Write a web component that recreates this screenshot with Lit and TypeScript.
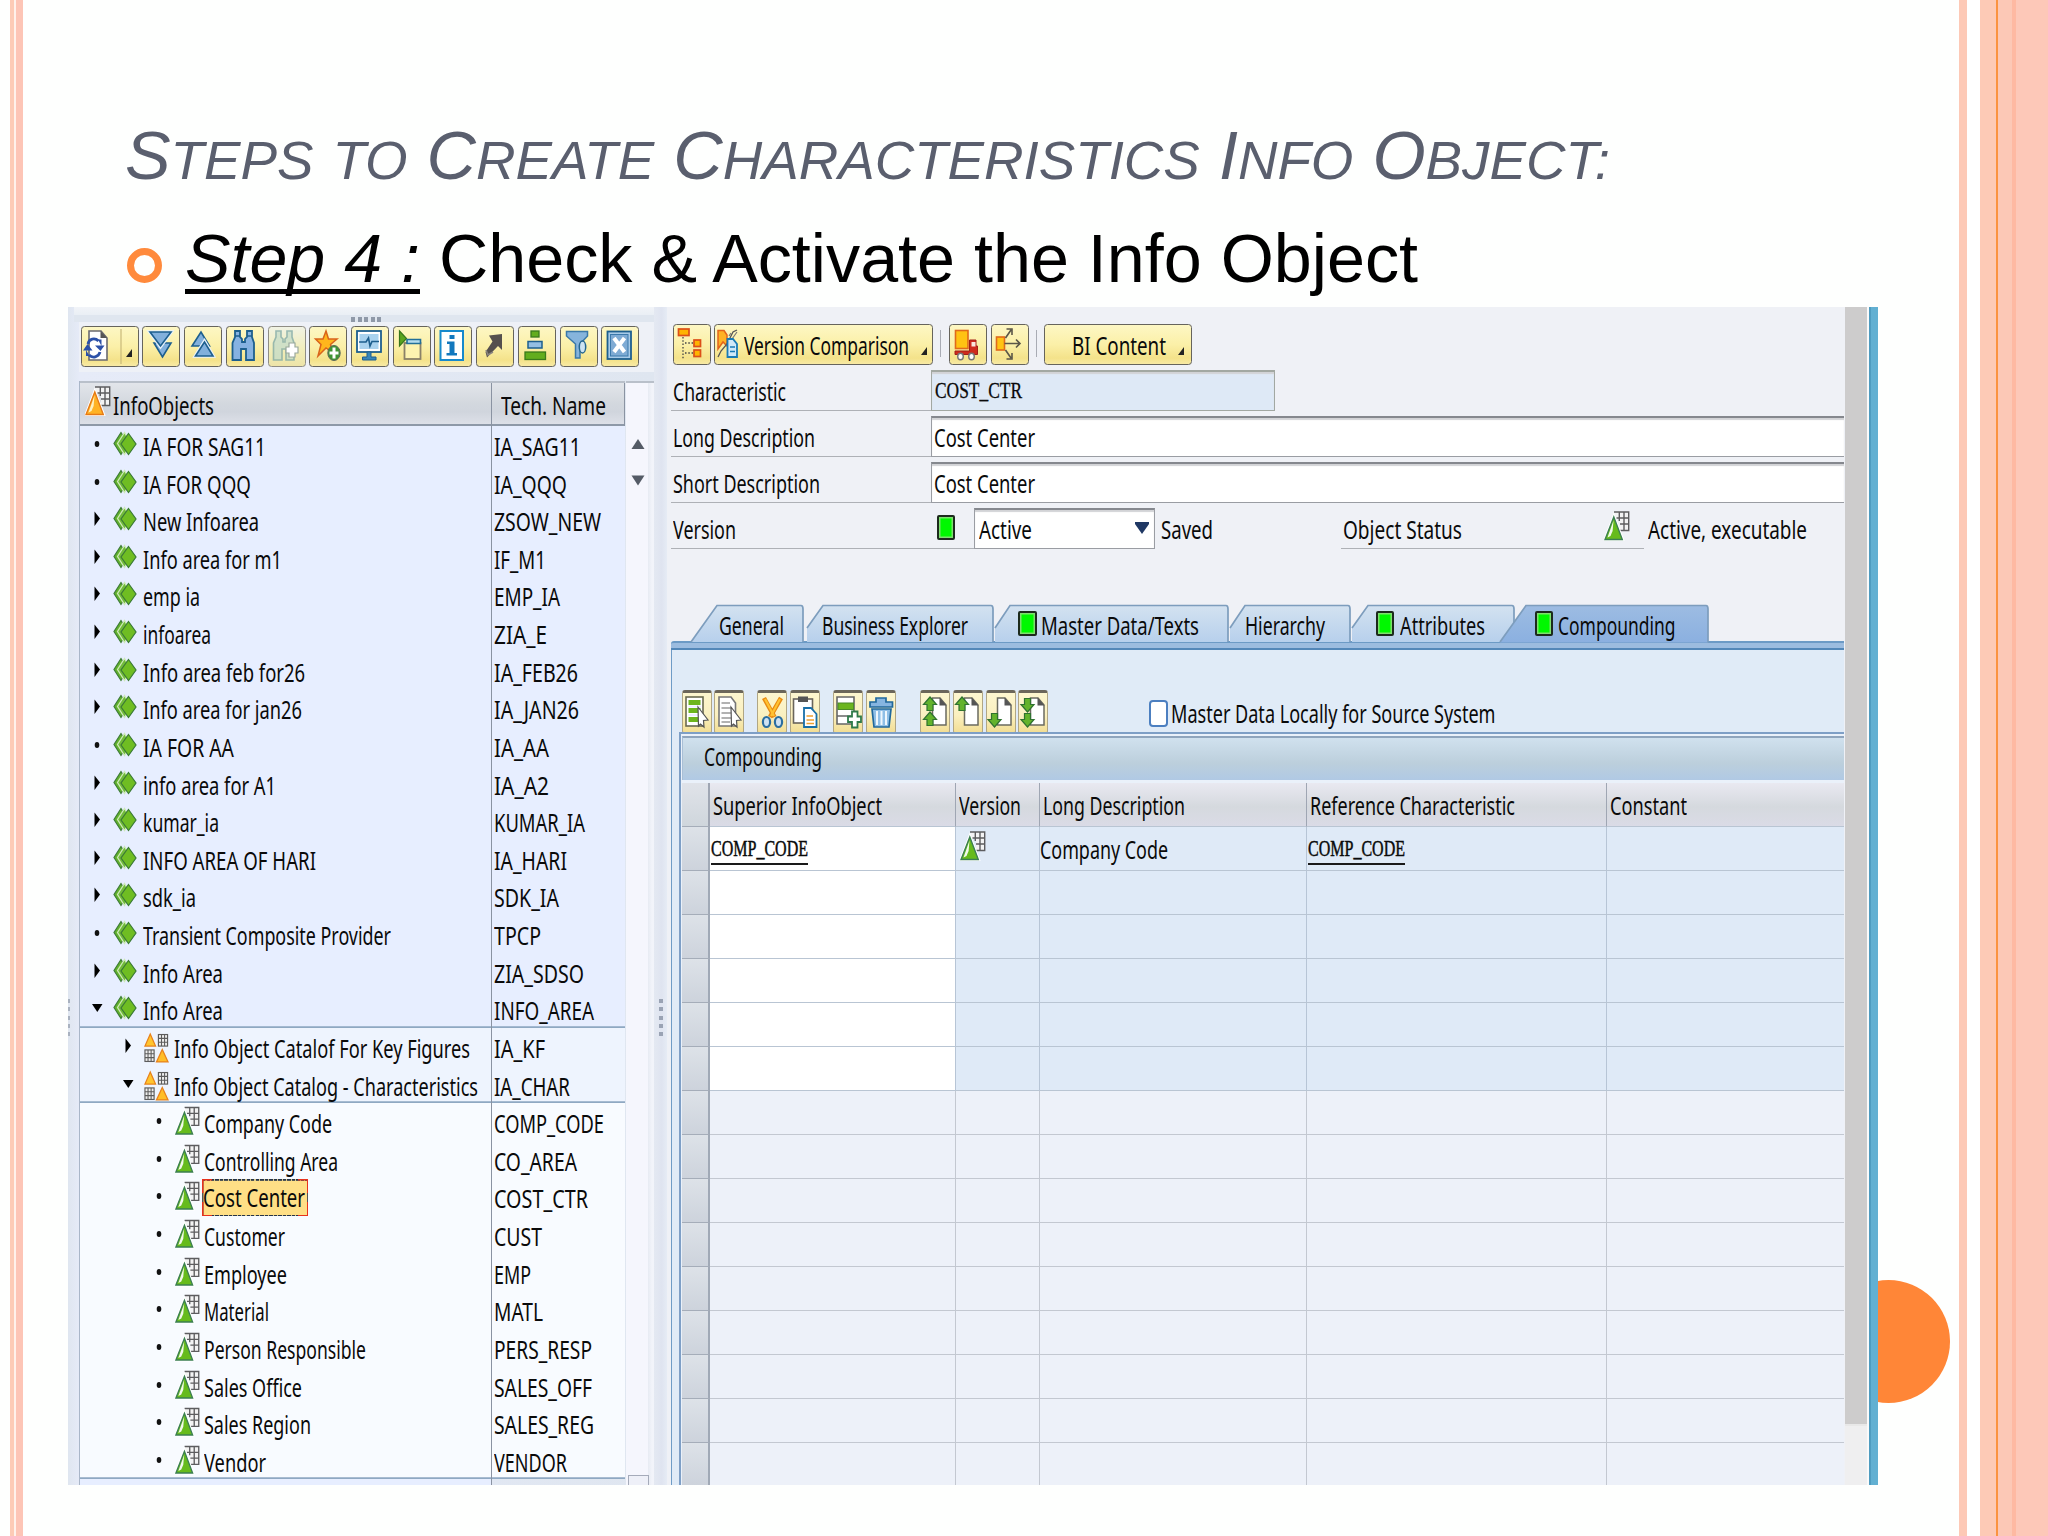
import { LitElement, html, css, svg, nothing } from "lit";
import type { TemplateResult } from "lit";
import { customElement, property } from "lit/decorators.js";
import { classMap } from "lit/directives/class-map.js";

/* A single line of text condensed or widened to an exact width. */
@customElement("fit-text")
class FitText extends LitElement {
  @property({ type: Number }) w = 100;
  static styles = css`
    :host { display: block; flex: none; white-space: pre; text-align: left; }
    .ink { display: inline-block; transform-origin: 0 50%; }
  `;
  render() {
    return html`<span class="ink"><slot></slot></span>`;
  }
  updated() {
    const ink = this.renderRoot.querySelector(".ink") as HTMLElement;
    this.style.width = this.w + "px";
    ink.style.transform = "none";
    const natural = ink.getBoundingClientRect().width;
    if (natural > 0) ink.style.transform = `scaleX(${this.w / natural})`;
  }
}

const fit = (t: string, w: number) => html`<fit-text .w=${w}>${t}</fit-text>`;

/* ---------- icons ---------- */
const pic = (w: number, h: number, body: unknown) =>
  html`<svg width=${w} height=${h} viewBox="0 0 ${w} ${h}">${body}</svg>`;

const BL = "#1d5f8e";
const leftIcons = [
  svg`<path d="M12 17H29L20.500 31Z" fill="#82b0dc" stroke=${BL} stroke-width="1.600"/><path d="M8 6H29L18.500 20.500Z" fill="#82b0dc" stroke="#e8f2fb" stroke-width="3.600"/><path d="M8 6H29L18.500 20Z" fill="#82b0dc" stroke=${BL} stroke-width="1.600"/>`,
  svg`<path d="M8 20H25.500L17 6Z" fill="#82b0dc" stroke=${BL} stroke-width="1.600"/><path d="M11.500 30H29L20.500 15.500Z" fill="#82b0dc" stroke="#e8f2fb" stroke-width="3.600"/><path d="M11.500 30H29L20.500 16Z" fill="#82b0dc" stroke=${BL} stroke-width="1.600"/>`,
  svg`<path d="M10 5H15V11L17 13V16H20V13L22 11V5H27V11L29 17V34H21V23H16V34H7.500V17L10 11Z" fill="#86b2e2" stroke=${BL} stroke-width="1.800"/><path d="M10 10H15M22 10H27" stroke=${BL} stroke-width="1.500"/>`,
  svg`<g opacity=".75"><path d="M9 5H14V11L16 13V16H18V13L20 11V5H25V11L27 17V34H19V23H15V34H6.500V17L9 11Z" fill="#c5dcc9" stroke="#7ba6a4" stroke-width="1.600"/></g><path d="M22 17H28V21H31V27H28V31H22V27H19V21H22Z" fill="#fff" stroke="#9aa89c" stroke-width="1.200"/>`,
  svg`<path d="M17 5L19.500 13H28L21.500 18.500L24 27L17 22L9 30L12 18.500L6.500 13H14Z" fill="#ffb61c" stroke="#d9641c" stroke-width="1.500"/><ellipse cx="25" cy="27" rx="6.200" ry="7.500" fill="#3f9433" stroke="#5b665a" stroke-width="1"/><path d="M25 21.500V32.500M20.500 27H29.500" stroke="#fff" stroke-width="3"/>`,
  svg`<rect x="7" y="5" width="24" height="21" fill="#fff" stroke=${BL} stroke-width="1.800"/><rect x="9.500" y="8" width="19" height="15" fill="#a9d2ee"/><path d="M9 16H16L18.500 12L20 20L22 15.500H29" fill="none" stroke=${BL} stroke-width="1.600"/><path d="M17 26H21V31H26V34H12.500V31H17Z" fill="#3a86b8" stroke=${BL} stroke-width="1"/>`,
  svg`<path d="M7.500 5L14.500 12.500L7.500 20Z" fill="#5aa51f" stroke="#37761a" stroke-width="1.200"/><rect x="12.500" y="17" width="16" height="16" fill="#fdf3b0" stroke="#8a8168" stroke-width="1.800"/><path d="M15 13.500H28.500V17.500H15Z" fill="#b4dcef" stroke="#226f99" stroke-width="1.600"/>`,
  svg`<rect x="6.500" y="5" width="22.500" height="29" fill="#fff" stroke="#1689cc" stroke-width="2"/><rect x="15.500" y="9" width="5" height="4" fill="#1278be"/><path d="M13 15.500H20.500V27H23V29.500H12.500V27H15.500V18H13Z" fill="#1278be"/>`,
  svg`<path d="M13 9.500L26 8V24L22 20L11 31.500L9.500 26L16.500 15.500Z" fill="#55504e"/><path d="M10 24L12 29L17 26" stroke="#8b8580" stroke-width="1.500" fill="none"/>`,
  svg`<rect x="14" y="5" width="8" height="6" fill="#63ad1e" stroke="#3a7a1c" stroke-width="1.300"/><rect x="11" y="15.500" width="14" height="6.500" fill="#94bfe3" stroke=${BL} stroke-width="1.500"/><rect x="8" y="26" width="20.500" height="7.500" fill="#63ad1e" stroke="#3a7a1c" stroke-width="1.300"/>`,
  svg`<path d="M7.500 5.500H28.500V10L21 18V32H16.500V18L7.500 10Z" fill="#86b4dc" stroke="#3a78a8" stroke-width="1.500"/><ellipse cx="23.500" cy="21" rx="3.200" ry="6" fill="#cde3f2" stroke="#23658f" stroke-width="1.500"/>`,
  svg`<rect x="6.500" y="5.500" width="23.500" height="27.500" fill="#a8cbe8" stroke=${BL} stroke-width="1.800"/><rect x="9.500" y="8.500" width="17.500" height="21.500" fill="#7fabd4" stroke="#3b79ab" stroke-width="1"/><path d="M13 12L23.500 26M23.500 12L13 26" stroke="#fff" stroke-width="4"/>`,
];
const refreshIcon = svg`<path d="M9 5H21L27 12V34H9Z" fill="#fff" stroke="#6a6a70" stroke-width="1.600"/><path d="M20.500 5V12H27Z" fill="#555"/>
  <path d="M8 18C9 12.500 15 11.500 18.500 15" fill="none" stroke="#2b50a8" stroke-width="2.800"/><path d="M15 19.500H24.500L20.500 25Z M21.500 20V13.500H18Z" fill="#2b50a8"/>
  <path d="M20 26C18.500 31.500 12.500 32.500 9 29" fill="none" stroke="#2b50a8" stroke-width="2.800"/><path d="M3 24.500H12.500L7.500 18Z M6 24V30H9.500Z" fill="#2b50a8"/>
  <path d="M41 3V38" stroke="#c9b97a" stroke-width="1.200"/><path d="M46 31H52V23Z" fill="#222"/>`;

const cubeGrid = svg`<path d="M10.500 1H24.500V19H16V8H10.500Z" fill="#f3f3f3"/><path d="M10 1H24.700V19.500H16M15.300 1V10M20 1V19.500M12.500 7H24.500M16 13H24.500" stroke="#5d5d5f" stroke-width="1.400" fill="none"/>`;
const charIcon = (orange: boolean) => pic(26, 30, svg`${cubeGrid}
  <path d="M9.800 5.500L18.500 28.500H1Z" fill=${orange ? "#ffb224" : "#66bb1c"} stroke="#fff" stroke-width="3"/>
  <path d="M9.800 6L18.300 28.500H1Z" fill=${orange ? "#ffb224" : "#66bb1c"} stroke=${orange ? "#e67a15" : "#3b7f52"} stroke-width="1.400"/>
  <path d="M9.500 9.500L8.600 20L6.500 25L3.500 26.500Z" fill=${orange ? "#fff0c0" : "#f1f9ec"}/>`);
const diamondIcon = pic(24, 25, svg`<path d="M8 1.500L1 12.500L8 23.500L15 12.500Z" fill="#62b12c" stroke="#3d7c37" stroke-width="1.200"/><path d="M11.500 1.500L4.500 12.500L11.500 23.500L18 12.500Z" fill="#72bb3a" stroke="#cdeab8" stroke-width="1.300"/><path d="M15.500 2.500L23 13L15.500 23.500L8 13Z" fill="#6fbd22" stroke="#3a7a35" stroke-width="1.200"/>`);
const miniGrid = (x: number, y: number) => svg`<rect x=${x} y=${y} width="9.500" height="12" fill="#eee" stroke="#5c5c5c" stroke-width="1.200"/><path d="M${x + 3.200} ${y}v12M${x + 6.400} ${y}v12M${x} ${y + 4}h9.500M${x} ${y + 8}h9.500" stroke="#5c5c5c" stroke-width="1.100"/>`;
const catalogIcon = pic(26, 32, svg`<path d="M6.500 1.500L12 14H1Z" fill="#ffc52e" stroke="#e8821b" stroke-width="1.300"/>${miniGrid(15, 2)}${miniGrid(1, 18)}<path d="M19 17.500L25 30.500H13Z" fill="#ffbe28" stroke="#e8821b" stroke-width="1.300"/>`);
const led = html`<span class="led"></span>`;

const hierIcon = svg`<rect x="6.500" y="5" width="10.500" height="6.500" fill="#ffb400" stroke="#dc4f17" stroke-width="1.700"/><path d="M11 13V36M13 19H21M13 29H21" stroke="#444" stroke-width="1.300" stroke-dasharray="1.500 1.800" fill="none"/><rect x="22" y="16" width="6.500" height="6.500" fill="#ffb400" stroke="#dc4f17" stroke-width="1.700"/><rect x="22" y="26" width="6.500" height="6.500" fill="#ffb400" stroke="#dc4f17" stroke-width="1.700"/>`;
const compareIcon = svg`<path d="M5 6.500H11L14 11V22L10 18L5 25Z" fill="#ffb224" stroke="#e2631b" stroke-width="1.500"/><path d="M5 33L8 27L14 20L20 8L24 6" fill="none" stroke="#555" stroke-width="1.300"/><path d="M16 12L18 9M19 15L24 8" stroke="#777" stroke-width="1.200"/><path d="M14.500 15H20L24 20V33H14.500Z" fill="#cfe8f8" stroke="#187ab5" stroke-width="1.800"/><path d="M17 23H22M17 27.500H22" stroke="#187ab5" stroke-width="1.500"/>`;
const truckIcon = svg`<rect x="6.500" y="6.500" width="12.500" height="18" fill="#ffc313" stroke="#e06a1b" stroke-width="1.600"/><path d="M20.500 16H27V22H28.500V30.500H6V27H20.500Z" fill="#cf2b1d" stroke="#a21f18" stroke-width="1"/><rect x="22.500" y="18" width="4" height="4.500" fill="#fbe5dc"/><ellipse cx="11.500" cy="32.500" rx="2.800" ry="3.300" fill="#fff" stroke="#777" stroke-width="1.400"/><ellipse cx="22.500" cy="32.500" rx="2.800" ry="3.300" fill="#fff" stroke="#777" stroke-width="1.400"/>`;
const spreadIcon = svg`<rect x="6.500" y="13" width="8" height="13" fill="#ffc313" stroke="#e06a1b" stroke-width="1.600"/><path d="M14.500 19.500H29M26 15.500L30 19.500L26 23.500M15.500 14L21 6M16.500 5H22V11M15.500 26L21 34M16.500 35H22V29" fill="none" stroke="#5a5648" stroke-width="1.600"/>`;

/* table toolbar, each 30 x 44 */
const cursor = svg`<path d="M17 17L27 30L22.500 30.500L23 37L19.500 34L17.500 36Z" fill="#fff" stroke="#555" stroke-width="1.200"/>`;
const upArrow = (x: number, y: number) => svg`<path d="M${x} ${y}l6.500 7.500h-3.500v6h-6v-6h-3.500z" fill="#63b32c" stroke="#2f7230" stroke-width="1.200"/>`;
const downArrow = (x: number, y: number) => svg`<path d="M${x} ${y}l6.500 -7.500h-3.500v-6h-6v6h-3.500z" fill="#63b32c" stroke="#2f7230" stroke-width="1.200"/>`;
const sheet = svg`<path d="M12.500 8H20L26 15V35H12.500Z" fill="#fff" stroke="#6b6b60" stroke-width="1.500"/><path d="M19.500 7.500V15.500H26.500Z" fill="#555"/>`;
const gridIcons: { gap: number; body: unknown }[] = [
  { gap: 0, body: svg`<rect x="5" y="7" width="17" height="29" fill="#fff" stroke="#6a6a50" stroke-width="1.600"/><path d="M7.500 12.500H19.500M7.500 20.500H19.500M7.500 29.500H18" stroke="#6db51d" stroke-width="5"/><path d="M7.500 16.500H20M7.500 25H20" stroke="#eef" stroke-width="2"/>${cursor}` },
  { gap: 2.600, body: svg`<path d="M5 7H17L21.500 13V36H5Z" fill="#fff" stroke="#777" stroke-width="1.600"/><path d="M7.500 13H16M7.500 18H18M7.500 23H18M7.500 28H17M7.500 32H16" stroke="#999" stroke-width="1.500"/>${cursor}` },
  { gap: 13, body: svg`<path d="M7 8L17.500 27M24 8L13 27" stroke="#e88a12" stroke-width="4.500"/><path d="M8 9L17 26M23 9L14 26" stroke="#ffc232" stroke-width="2.200"/><ellipse cx="9.500" cy="32" rx="3.600" ry="5" fill="#cfe2f2" stroke="#2b6ea0" stroke-width="2.200"/><ellipse cx="21.500" cy="32" rx="3.600" ry="5" fill="#cfe2f2" stroke="#2b6ea0" stroke-width="2.200"/>` },
  { gap: 3, body: svg`<rect x="3.500" y="9" width="19" height="24" fill="#fff" stroke="#6a655c" stroke-width="1.600"/><rect x="8" y="6.500" width="10" height="5.500" fill="#555"/><path d="M14 18H21L26.500 24V37H14Z" fill="#fff" stroke="#186fa8" stroke-width="1.800"/><path d="M16.500 26H23M16.500 30H24M16.500 33.500H24" stroke="#f0a030" stroke-width="1.400"/>` },
  { gap: 13, body: svg`<path d="M4 7H21V34H4Z" fill="#fff" stroke="#666" stroke-width="1.600"/><path d="M4 26H18" stroke="#666" stroke-width="1.500"/><rect x="5" y="13" width="15.500" height="6.500" fill="#6cb51f" stroke="#4b8a28" stroke-width="1"/><path d="M19 21.500H24.500V26.500H28V32H24.500V37.500H19V32H15V26.500H19Z" fill="#fff" stroke="#2f7a4a" stroke-width="1.800"/>` },
  { gap: 3, body: svg`<path d="M10 8H20V12H26.500V17H4V12H10Z" fill="#86b5e0" stroke="#20689c" stroke-width="1.700"/><path d="M6 19H25L23 37H8Z" fill="#8fbfe6" stroke="#20689c" stroke-width="1.700"/><path d="M11 21V35M15.500 21V35M20 21V35" stroke="#eef7fd" stroke-width="2"/>` },
  { gap: 24, body: svg`${sheet}${upArrow(10, 7)}${upArrow(10, 22)}` },
  { gap: 2.800, body: svg`${sheet}${upArrow(10, 7)}` },
  { gap: 2.800, body: svg`${sheet}${downArrow(9.500, 37)}` },
  { gap: 2.800, body: svg`${sheet}${downArrow(9.500, 22)}${downArrow(9.500, 37)}` },
];

/* ---------- data ---------- */
type Node = { s: "dot" | "shut" | "open"; lv: 0 | 1 | 2; t: string; w: number; k: string; kw: number };
const n = (s: Node["s"], lv: Node["lv"], t: string, w: number, k: string, kw: number): Node => ({ s, lv, t, w, k, kw });
const nodes: Node[] = [
  n("dot", 0, "IA FOR SAG11", 123, "IA_SAG11", 87),
  n("dot", 0, "IA FOR QQQ", 108, "IA_QQQ", 73),
  n("shut", 0, "New Infoarea", 116, "ZSOW_NEW", 107),
  n("shut", 0, "Info area for m1", 139, "IF_M1", 52),
  n("shut", 0, "emp ia", 57, "EMP_IA", 66),
  n("shut", 0, "infoarea", 68, "ZIA_E", 53),
  n("shut", 0, "Info area feb for26", 162, "IA_FEB26", 84),
  n("shut", 0, "Info area for jan26", 159, "IA_JAN26", 85),
  n("dot", 0, "IA FOR AA", 91, "IA_AA", 55),
  n("shut", 0, "info area for A1", 133, "IA_A2", 55),
  n("shut", 0, "kumar_ia", 76, "KUMAR_IA", 91),
  n("shut", 0, "INFO AREA OF HARI", 173, "IA_HARI", 73),
  n("shut", 0, "sdk_ia", 53, "SDK_IA", 65),
  n("dot", 0, "Transient Composite Provider", 248, "TPCP", 47),
  n("shut", 0, "Info Area", 80, "ZIA_SDSO", 90),
  n("open", 0, "Info Area", 80, "INFO_AREA", 100),
  n("shut", 1, "Info Object Catalof For Key Figures", 296, "IA_KF", 51),
  n("open", 1, "Info Object Catalog - Characteristics", 304, "IA_CHAR", 76),
  n("dot", 2, "Company Code", 128, "COMP_CODE", 110),
  n("dot", 2, "Controlling Area", 134, "CO_AREA", 83),
  n("dot", 2, "Cost Center", 102, "COST_CTR", 94),
  n("dot", 2, "Customer", 81, "CUST", 48),
  n("dot", 2, "Employee", 83, "EMP", 37),
  n("dot", 2, "Material", 65, "MATL", 49),
  n("dot", 2, "Person Responsible", 162, "PERS_RESP", 98),
  n("dot", 2, "Sales Office", 98, "SALES_OFF", 98),
  n("dot", 2, "Sales Region", 107, "SALES_REG", 100),
  n("dot", 2, "Vendor", 62, "VENDOR", 73),
];

type Tab = { x: number; w: number; slant: number; t: string; tx: number; tw: number; led?: number; on?: boolean; cut?: number };
/* x: left foot; slant: run of the sloped edge; cut: how far up the slope is clipped by its neighbour */
const tabs: Tab[] = [
  { x: 690, w: 114, slant: 27, t: "General", tx: 718.500, tw: 65 },
  { x: 806, w: 188, slant: 17, t: "Business Explorer", tx: 822, tw: 146, cut: 24 },
  { x: 994, w: 235, slant: 16, t: "Master Data/Texts", tx: 1041, tw: 158, led: 1018, cut: 24 },
  { x: 1229, w: 122, slant: 16, t: "Hierarchy", tx: 1244.500, tw: 80, cut: 24 },
  { x: 1351, w: 164, slant: 17, t: "Attributes", tx: 1399.500, tw: 85, led: 1375.500, cut: 24 },
  { x: 1499, w: 210, slant: 27, t: "Compounding", tx: 1558, tw: 117.500, led: 1534.500, on: true },
];

@customElement("tree-row")
class TreeRow extends LitElement {
  @property({ attribute: false }) node!: Node;
  @property({ type: Boolean }) picked = false;
  static styles = css`
    :host { display: grid; grid-template-columns: 412px 133px; height: 37.630px; flex: none; }
    svg { display: block; }
    .name { display: flex; align-items: flex-start; border-right: 1.500px solid #8a93a2; box-sizing: border-box; padding-top: 5px; }
    .lv0 { padding-left: 8px; } .lv1 { padding-left: 39px; } .lv2 { padding-left: 70px; }
    .mark { width: 18px; height: 24px; }
    .lead { display: flex; width: 25px; margin: 0 5px 0 7px; }
    .lv0 .lead { width: 30px; margin: 0 0 0 7px; }
    .lv1 .lead { margin: -1px 5px 0 7px; }
    .lv2 .lead { margin: -2px 4px 0 7px; }
    .code, .txt { line-height: 35px; }
    .txt { margin-top: -2px; }
    .code { padding: 3px 0 0 2px; }
    .picked { box-sizing: border-box; height: 37px; margin: -4px 0 0 -2px; padding: 1px 3px 0 1px; line-height: 35px;
      background:
        linear-gradient(#e8321c, #e8321c) 0 0 / 10px 1.500px, linear-gradient(#e8321c, #e8321c) 0 0 / 1.500px 14px,
        linear-gradient(#e8321c, #e8321c) 100% 0 / 10px 1.500px, linear-gradient(#e8321c, #e8321c) 100% 0 / 1.500px 14px,
        linear-gradient(#e8321c, #e8321c) 0 100% / 10px 1.500px, linear-gradient(#e8321c, #e8321c) 0 100% / 1.500px 14px,
        linear-gradient(#e8321c, #e8321c) 100% 100% / 10px 1.500px, linear-gradient(#e8321c, #e8321c) 100% 100% / 1.500px 14px,
        repeating-linear-gradient(90deg, #26344a 0 3px, #d8c88a 3px 4.500px) 0 0 / 100% 1.800px,
        repeating-linear-gradient(90deg, #26344a 0 3px, #d8c88a 3px 4.500px) 0 100% / 100% 1.800px,
        linear-gradient(#555, #555) 0 0 / 1.500px 100%, linear-gradient(#555, #555) 100% 0 / 1.500px 100%, #ffdf86;
      background-repeat: no-repeat; }
  `;
  render() {
    const d = this.node;
    const mark = d.s === "dot" ? svg`<ellipse cx="9" cy="13" rx="2.300" ry="3" fill="#111"/>`
      : d.s === "shut" ? svg`<path d="M6.500 5.500L12 12.500L6.500 20Z" fill="#000"/>`
      : svg`<path d="M4 9H14.500L9.300 17Z" fill="#000"/>`;
    const icon = d.lv === 0 ? diamondIcon : d.lv === 1 ? catalogIcon : charIcon(false);
    return html`<div class="name lv${d.lv}">
        <span class="mark">${pic(18, 24, mark)}</span><span class="lead">${icon}</span>
        <span class=${classMap({ txt: true, picked: this.picked })}>${fit(d.t, d.w)}</span>
      </div><div class="code">${fit(d.k, d.kw)}</div>`;
  }
}

@customElement("app-root")
class AppRoot extends LitElement {
  static styles = css`
    :host { display: block; }
    svg { display: block; flex: none; }
    .slide { position: relative; box-sizing: border-box; width: 2048px; height: 1536px; overflow: hidden; padding: 114.700px 0 0 68px;
      font-family: "Liberation Sans", Arial, sans-serif;
      background: linear-gradient(90deg, #fefffe 10.500px, #fdcbb6 10.500px 14px, #fff1ea 14px 15.700px, #fdc5b6 15.700px 23.500px, #fefffe 23.500px 1959px, #fdc9b6 1959px 1967px, #fff 1967px 1980px, #fdcab6 1980px 1995.700px, #fb9340 1995.700px 1998px, #fcc8b6 1998px 2012px, #feb9a2 2012px 2016.300px, #fdc8b8 2016.300px); }
    .ball { position: absolute; left: 1827px; top: 1280px; width: 123px; height: 123px; border-radius: 50%; background: #ff8637; }
    h1, h2 { margin: 0; font-weight: 400; font-size: 68px; line-height: 80px; height: 80px; }
    h1 { font-style: italic; color: #5a5f6e; padding-left: 57px; }
    .sm { font-size: 54.400px; }
    h2 { margin-top: 23.400px; display: flex; color: #000; }
    .ring { box-sizing: border-box; width: 35px; height: 35px; border: 7px solid #ff8a3c; border-radius: 50%; margin: 29.500px 23px 0 58.500px; }
    .u { font-style: italic; text-decoration: underline; text-decoration-thickness: 5px; text-underline-offset: 7px; text-decoration-skip-ink: none; }
    .rest { margin-left: 19px; }

    .win { position: relative; display: flex; margin-top: 8.900px; width: 1810px; height: 1178px; overflow: hidden; color: #0a0a0a;
      font-family: "Noto Sans", "DejaVu Sans", sans-serif; font-size: 25.500px; background: #eff1f6; }
    .left { width: 586px; flex: none; box-sizing: border-box; padding-left: 11px; display: flex; flex-direction: column; background: linear-gradient(90deg, #dfe6f0, #e6ebf8 12px, #dfe6f0); }
    .cap { height: 15px; margin-left: -5px; background: linear-gradient(#f1f4f8, #eaeff5 50%, #dfe6ef 51%); display: flex; align-items: flex-end; padding-left: 277px; gap: 2.600px; flex: none; }
    .cap i { width: 4px; height: 4.500px; background: #8f99a8; }
    .tools { display: flex; box-sizing: border-box; gap: 3.730px; padding: 4.500px 0 0 1.700px; height: 50px; background: #eef1f7; flex: none; }
    .btn { box-sizing: border-box; flex: none; height: 41px; width: 38px; border: 1.600px solid #66645c; border-radius: 3.500px; background: linear-gradient(#fdf7c4, #fbf0a8 50%, #f4e28a 85%, #f8eaa4); }
    .btn svg { margin: -1.600px; }
    .btn.off { border-color: #8f8d84; background: linear-gradient(#f1f3e4, #f1edb8 60%, #ede4a8); }
    .btn.wide { width: 58px; }
    .grid { margin-top: 9px; display: flex; flex: none; height: 1104px; }
    .tree { width: 545px; display: flex; flex-direction: column; border-left: 1.500px solid #a9b6c8; box-sizing: content-box; flex: none; }
    .th { display: grid; grid-template-columns: 412px 133px; height: 45px; box-sizing: border-box; border-top: 2px solid #b9c0ca; border-bottom: 2px solid #8e99a8; flex: none; background: linear-gradient(#e2e5ea, #d3d8de 50%, #d0d5dd 70%, #dde0e8); }
    .th > div { display: flex; box-sizing: border-box; border-right: 1.500px solid #8a93a2; line-height: 44px; }
    .th .a { padding: 0 0 0 5px; } .th .a svg { margin: 3px 1.500px 0 0; }
    .th .b { padding-left: 9px; }
    .th fit-text { margin-top: .5px; }
    .g0 { background: #e7eeff; } .g1 { background: #eef4fe; } .g2 { background: #f8fbff; }
    .g0, .g1, .g2 { box-shadow: inset 0 -1.700px #8fa8c2; flex: none; }
    .end { height: 8px; background: #e7eeff; width: 412px; border-right: 1.500px solid #8a93a2; box-sizing: border-box; }
    .sb { flex: 1; margin-left: 1px; background: linear-gradient(90deg, #f5f6fd 22px, #e7ebf3 22px, #f2f4fa 26px); display: flex; flex-direction: column; align-items: flex-start; border-top: 2px solid #b9c0ca; }
    .sb svg { margin-left: 3px; }
    .gap { height: 54px; flex: none; }
    .sbend { margin: 988px 0 0 2px; width: 19px; height: 12px; border: 1.500px solid #a5abba; background: #eef0f8; flex: none; }
    .split { width: 13px; flex: none; background: linear-gradient(90deg, #e4e9f2, #dfe4f0 60%, #e6ecf5); box-sizing: border-box; padding: 692px 0 0 5px; display: flex; flex-direction: column; gap: 4.300px; }
    .split i { width: 3.500px; height: 4px; background: #9aa3b4; }
    .grip { position: absolute; left: 0; top: 692px; display: flex; flex-direction: column; gap: 4.300px; }
    .grip i { width: 2px; height: 4px; background: #a9b2c0; }

    .right { width: 1177px; flex: none; display: flex; flex-direction: column; background: #eff1f6; overflow: hidden; }
    .rbar { display: flex; padding: 17.500px 0 0 5.700px; height: 63px; box-sizing: border-box; flex: none; }
    .rbar .btn { height: 41px; display: flex; line-height: 40px; }
    .vsep { width: 1.500px; height: 27px; background: #a9acb4; margin: 6px 0 0; }
    .frow { display: flex; height: 46px; box-sizing: border-box; padding-left: 4px; flex: none; }
    .lab { box-sizing: border-box; width: 260px; height: 41px; border-bottom: 1.800px solid #aeb1b6; padding-left: 1.500px; line-height: 42px; }
    .inp { box-sizing: border-box; height: 41px; border: 1.800px solid #9a9da3; border-top: 2.200px solid #85888e; background: #fff; box-shadow: inset 0 2px 1px #d2d3d6; padding-left: 2px; line-height: 39px; }
    .long { flex: 1; border-right: 0; }
    .ro { width: 344px; background: #dee9f6; border-color: #a2a8a2; font-family: "Liberation Serif", serif; font-size: 23.500px; line-height: 37px; padding-left: 3px; -webkit-text-stroke: .3px #0a0a0a; }
    .led { display: block; flex: none; box-sizing: border-box; width: 18.500px; height: 25px; border: 2.200px solid #1c2a1c; border-radius: 2px; background: #00f800; box-shadow: inset 0 0 0 1.500px #7ee06e; }
    .ver .lab { width: 262.500px; border-bottom: 0; }
    .rule { display: flex; border-bottom: 1.800px solid #aeb1b6; height: 41px; box-sizing: border-box; width: 303px; }
    .drop { width: 181px; display: flex; padding-left: 4px; }
    .drop svg { margin: 12px 0 0 103px; }
    .plain { line-height: 42px; }

    .tabs { height: 46px; margin-top: 42px; position: relative; display: flex; flex: none; }
    .tab { position: absolute; top: 0; height: 40px; display: flex; }
    .tab .led { position: absolute; top: 7px; }
    .tab fit-text { position: absolute; top: 0; line-height: 42px; }
    .band { box-sizing: border-box; position: absolute; left: 4px; right: 0; top: 37.500px; height: 8.500px; background: #9cbcdf; border-top: 2px solid #6c9ac5; border-bottom: 2px solid #5387b8; border-top-left-radius: 3px; }
    .pane { flex: 1; margin-left: 4px; border-left: 1.800px solid #6f9cc6; background: #e0ebf7; display: flex; flex-direction: column; padding-left: 6.500px; box-sizing: border-box; min-height: 0; }
    .gtools { display: flex; align-items: flex-start; height: 82.500px; padding: 40px 0 0 3px; box-sizing: border-box; flex: none; }
    .gb { box-sizing: border-box; width: 30px; height: 44px; border: 1.600px solid #b0a684; border-top: 3px solid #6b665a; border-bottom: 1.500px solid #8b8a80; border-radius: 3px; background: linear-gradient(#fdf6cf, #faf0c0 55%, #f2dd92); flex: none; }
    .gb svg { margin: -3px 0 0 -1.600px; }
    .chk { box-sizing: border-box; width: 19px; height: 27px; border: 2px solid #4c7fc0; border-radius: 4px; background: #fff; margin: 10px 2.500px 0 101px; }
    .gtools fit-text { line-height: 42px; margin-top: 2px; }
    .table { flex: 1; border: 2px solid #7e9fc6; border-right: 0; border-bottom: 0; padding: 2px 0 0 1px; display: flex; flex-direction: column; min-height: 0; background: #eaf1fa; }
    .cbar { box-sizing: border-box; height: 44px; border-top: 2px solid #8fa5bd; border-left: 1px solid #a9bfd6; background: linear-gradient(#d0e1ee, #bccfdc 60%, #b0c9e4); padding-left: 21px; line-height: 37px; flex: none; margin-bottom: 3px; }
    .r { display: grid; grid-template-columns: 28px 246.500px 83.500px 267.500px 300px 1fr; height: 43.950px; flex: none; }
    .r > div { box-sizing: border-box; border-right: 1.600px solid #b7c5d6; border-bottom: 1.800px solid #b9c5d3; display: flex; line-height: 41px; padding-top: 2px; }
    .r > div:last-child { border-right: 0; }
    .r > .s { background: linear-gradient(#dde2e8, #cdd3dc); border-right: 2.500px solid #a0a9b6; border-bottom-color: #a5adb9; }
    .r.hd > div { background: linear-gradient(#e9e9f1, #d5d9de 55%, #dadbe6); border-right-color: #9fa6b3; padding-left: 3px; line-height: 40px; }
    .r.hd > .s { background: linear-gradient(#e0e3e9, #cfd6dc); }
    .live > div { background: #dfeaf7; } .live > .in { background: #fff; }
    .idle > div { background: #edf1f9; border-color: #c3c8d1; }
    .mono { font-family: "Liberation Serif", serif; font-size: 23.500px; -webkit-text-stroke: .5px #0a0a0a; }
    .mono fit-text { line-height: 39px; border-bottom: 2px solid #1a1a1a; height: 34px; margin-left: 1px; }
    .vscroll { width: 24px; margin-left: 1px; height: 100%; flex: none; background: #efeff0; border-right: 2px solid #fafafa; box-sizing: border-box; }
    .thumb { height: 1117px; background: #cdcccc; border-bottom: 2px solid #e8e8e8; }
    .edge { flex: 1; background: linear-gradient(90deg, #4f9cc0 2px, #62b0d2 2px); }
    .rest-rows { flex: 1; overflow: hidden; display: flex; flex-direction: column; min-height: 0; }
  `;

  private title() {
    const words = ["Steps", "to", "Create", "Characteristics", "Info", "Object:"];
    return words.map((w, i) => {
      const up = w.toUpperCase();
      const sp = i ? " " : "";
      if (w === "to") return html`${sp}<span class="sm">${up}</span>`;
      return html`${sp}${up[0]}<span class="sm">${up.slice(1)}</span>`;
    });
  }

  private group(cls: string, from: number, to: number) {
    return html`<div class=${cls}>${nodes.slice(from, to).map(
      (d) => html`<tree-row .node=${d} ?picked=${d.t === "Cost Center"}></tree-row>`)}</div>`;
  }

  private tab(t: Tab): TemplateResult {
    const c = t.cut ?? 38;
    const top = `M1 ${c}L${t.slant} 1.500H${t.w - 3}Q${t.w - 1} 1.500 ${t.w - 1} 5V${t.on ? 38.500 : 38}`;
    const id = "g" + t.x;
    return html`<div class="tab" style="left:${t.x - 667}px;width:${t.w}px">
      <svg width=${t.w} height="40" viewBox="0 0 ${t.w} 40">
        <defs><linearGradient id=${id} x2="0" y2="1"><stop offset="0" stop-color=${t.on ? "#9dbce2" : "#d3e2f0"}/><stop offset="1" stop-color=${t.on ? "#8bb0e0" : "#b7d0ec"}/></linearGradient></defs>
        <path d="${top}H1Z" fill="url(#${id})"/><path d=${top} fill="none" stroke="#7d9dbd" stroke-width="1.700"/>
      </svg>
      ${t.led ? html`<span class="led" style="left:${t.led - t.x}px"></span>` : nothing}
      <fit-text .w=${t.tw} style="left:${t.tx - t.x}px">${t.t}</fit-text></div>`;
  }

  render() {
    const corner = svg`<path d="M0 8H6V0Z" fill="#222"/>`;
    return html`<div class="slide">
      <div class="ball"></div>
      <h1><fit-text .w=${1485}>${this.title()}</fit-text></h1>
      <h2><span class="ring"></span><fit-text .w=${235}><span class="u">Step 4 :</span></fit-text><fit-text class="rest" .w=${979}>Check &amp; Activate the Info Object</fit-text></h2>
      <div class="win">
        <div class="left">
          <div class="cap"><i></i><i></i><i></i><i></i><i></i></div>
          <div class="tools">
            <div class="btn wide">${pic(58, 41, refreshIcon)}</div>
            ${leftIcons.map((b, i) => html`<div class=${classMap({ btn: true, off: i === 3 })}>${pic(38, 41, b)}</div>`)}
          </div>
          <div class="grid">
            <div class="tree">
              <div class="th"><div class="a">${charIcon(true)}${fit("InfoObjects", 101)}</div><div class="b">${fit("Tech. Name", 105)}</div></div>
              ${this.group("g0", 0, 16)}${this.group("g1", 16, 18)}${this.group("g2", 18, 28)}
              <div class="end"></div>
            </div>
            <div class="sb">
              <div class="gap"></div>
              ${pic(18, 60, svg`<path d="M2.500 12H15.500L9 2Z" fill="#545b66"/><path d="M2.500 38.500H15.500L9 48.500Z" fill="#545b66"/>`)}
              <div class="sbend" style="margin-top:978px"></div>
            </div>
          </div>
        </div>
        <div class="split"><i></i><i></i><i></i><i></i><i></i></div>
        <div class="right">
          <div class="rbar">
            <div class="btn">${pic(38, 41, hierIcon)}</div>
            <div class="btn" style="width:219px;margin-left:3px">${pic(30, 41, compareIcon)}${html`<fit-text .w=${165} style="margin-left:2px">Version Comparison</fit-text>`}<span style="margin:23px 0 0 14px">${pic(7, 9, corner)}</span></div>
            <div class="vsep" style="margin-left:7px"></div>
            <div class="btn" style="margin-left:8px">${pic(38, 41, truckIcon)}</div>
            <div class="btn" style="margin-left:3.500px">${pic(38, 41, spreadIcon)}</div>
            <div class="vsep" style="margin-left:7px"></div>
            <div class="btn" style="width:148px;margin-left:7px"><fit-text .w=${94} style="margin-left:27px">BI Content</fit-text><span style="margin:23px 0 0 13px">${pic(7, 9, corner)}</span></div>
          </div>
          <div class="frow"><div class="lab">${fit("Characteristic", 113)}</div><div class="inp ro">${fit("COST_CTR", 87)}</div></div>
          <div class="frow"><div class="lab">${fit("Long Description", 142)}</div><div class="inp long">${fit("Cost Center", 101)}</div></div>
          <div class="frow"><div class="lab">${fit("Short Description", 147)}</div><div class="inp long">${fit("Cost Center", 101)}</div></div>
          <div class="frow">
            <div class="rule ver"><div class="lab">${fit("Version", 63)}</div><span style="margin:7px 0 0 3px">${led}</span></div>
            <div class="inp drop">${fit("Active", 53)}${pic(14, 12, svg`<path d="M0 0H14V2L7 12L0 2Z" fill="#1f3864"/>`)}</div>
            <div class="plain" style="margin-left:6px">${fit("Saved", 52)}</div>
            <div class="rule plain" style="margin-left:128px">
              <div style="margin-left:2px">${fit("Object Status", 119)}</div><div style="margin:3px 0 0 142px">${charIcon(false)}</div></div>
            <div class="plain" style="margin-left:4px">${fit("Active, executable", 159)}</div>
          </div>
          <div style="height:8px;flex:none"></div>
          <div class="tabs"><div class="band"></div>${tabs.map((t) => this.tab(t))}</div>
          <div class="pane">
            <div class="gtools">
              ${gridIcons.map((g) => html`<div class="gb" style="margin-left:${g.gap}px">${pic(30, 44, g.body)}</div>`)}
              <div class="chk"></div>${fit("Master Data Locally for Source System", 324.5)}
            </div>
            <div class="table">
              <div class="cbar">${fit("Compounding", 118)}</div>
              <div class="rest-rows">
                <div class="r hd"><div class="s"></div><div>${fit("Superior InfoObject", 169)}</div><div>${fit("Version", 62)}</div><div>${fit("Long Description", 142)}</div><div>${fit("Reference Characteristic", 205)}</div><div>${fit("Constant", 77)}</div></div>
                <div class="r live"><div class="s"></div><div class="in mono">${fit("COMP_CODE", 97)}</div><div style="padding:4px 0 0 4px">${charIcon(false)}</div><div>${fit("Company Code", 128)}</div><div class="mono">${fit("COMP_CODE", 97)}</div><div></div></div>
                ${Array.from({ length: 14 }, (_, i) => html`<div class="r ${i < 5 ? "live" : "idle"}"><div class="s"></div><div class="in"></div><div></div><div></div><div></div><div></div></div>`)}
              </div>
            </div>
          </div>
        </div>
        <div class="vscroll"><div class="thumb"></div></div>
        <div class="edge"></div>
        <div class="grip"><i></i><i></i><i></i><i></i><i></i></div>
      </div>
    </div>`;
  }
}
